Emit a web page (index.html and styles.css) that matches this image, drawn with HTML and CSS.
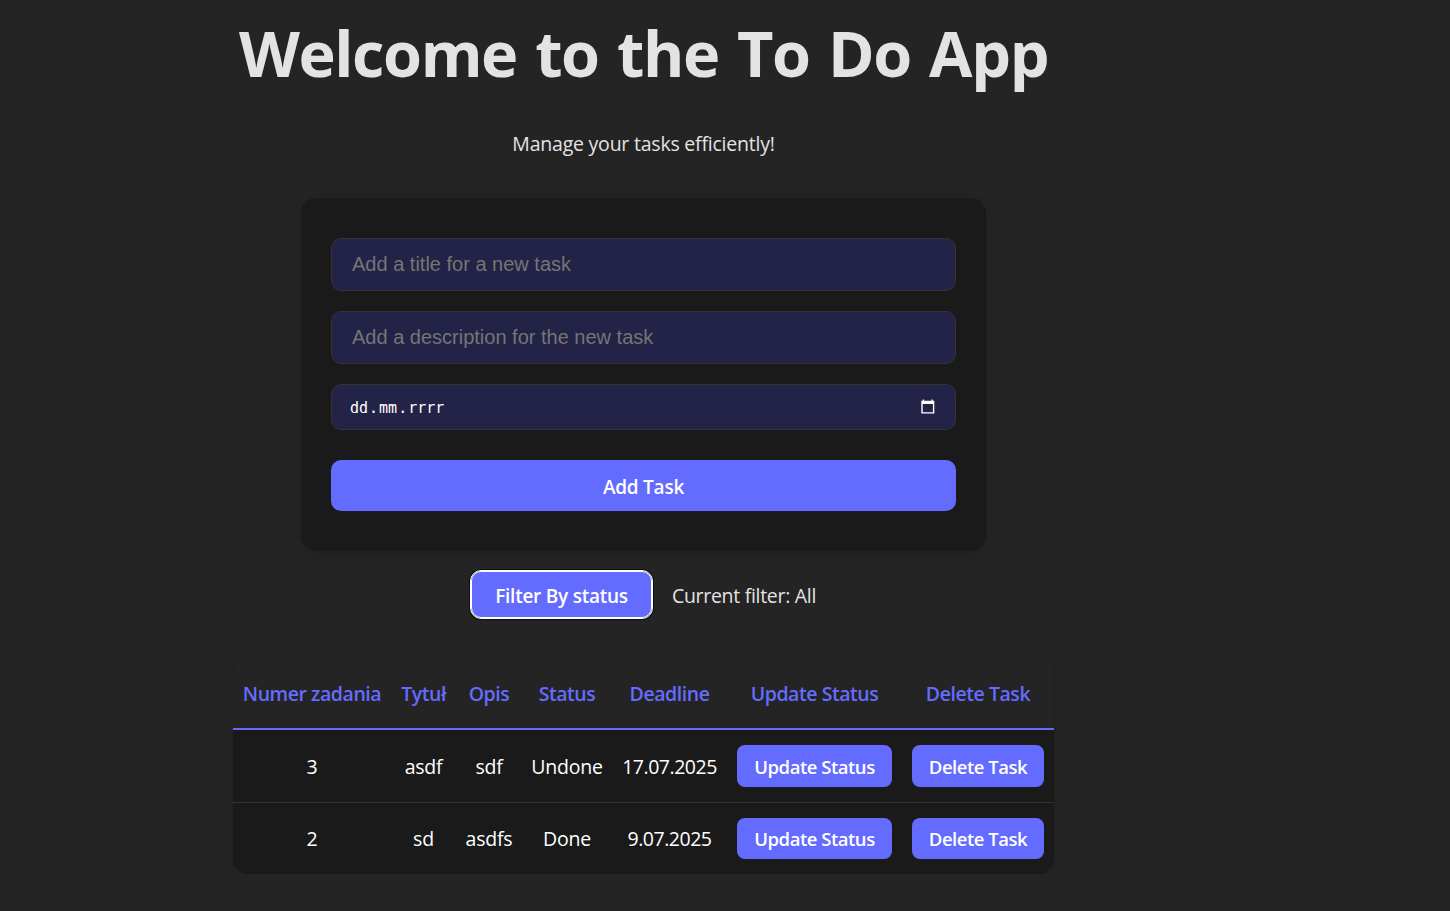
FILE: index.html
```html
<!DOCTYPE html>
<html lang="en">
<head>
<meta charset="utf-8">
<title>To Do App</title>
<link rel="stylesheet" href="styles.css">
</head>
<body>
<main class="app">
  <h1 class="title">Welcome to the To Do App</h1>
  <p class="subtitle">Manage your tasks efficiently!</p>
  <form class="task-form">
    <input class="field" type="text" placeholder="Add a title for a new task">
    <input class="field" type="text" placeholder="Add a description for the new task">
    <div class="field date-field">
      <span class="date-text">dd<span class="dot">.</span>mm<span class="dot">.</span>rrrr</span>
      <svg class="calendar" width="15" height="16" viewBox="0 0 15 16"><path fill="#fff" fill-rule="evenodd" d="M2.800 .6h1.300v1.200h7.400V.6h1.300v1.200h1.500V14.500H1.300V1.800h1.500zM2.700 5v8.200h10.200V5z"/></svg>
    </div>
    <button class="btn add-btn" type="button">Add Task</button>
  </form>
  <div class="filter">
    <button class="btn filter-btn" type="button">Filter By status</button>
    <span class="filter-label">Current filter: All</span>
  </div>
  <table class="tasks">
    <colgroup><col class="c-num"><col class="c-title"><col class="c-desc"><col class="c-status"><col class="c-date"><col class="c-update"><col class="c-delete"></colgroup>
    <thead>
      <tr><th>Numer zadania</th><th>Tytuł</th><th>Opis</th><th>Status</th><th>Deadline</th><th>Update Status</th><th>Delete Task</th></tr>
    </thead>
    <tbody>
      <tr><td>3</td><td>asdf</td><td>sdf</td><td>Undone</td><td class="date">17.07.2025</td><td class="action"><button class="btn row-btn" type="button">Update Status</button></td><td class="action"><button class="btn row-btn" type="button">Delete Task</button></td></tr>
      <tr><td>2</td><td>sd</td><td>asdfs</td><td>Done</td><td class="date">9.07.2025</td><td class="action"><button class="btn row-btn" type="button">Update Status</button></td><td class="action"><button class="btn row-btn" type="button">Delete Task</button></td></tr>
    </tbody>
  </table>
</main>
</body>
</html>
```
FILE: styles.css
```css
* { box-sizing: border-box; }
body {
  margin: 0;
  background: #242424;
  color: #e3e3e3;
  font-family: "Open Sans", "Segoe UI", sans-serif;
  font-size: 19.5px;
  line-height: 30px;
  letter-spacing: -0.22px;
}
.app {
  width: 821px;
  margin-left: 233px;
  padding-top: 18px;
  display: flex;
  flex-direction: column;
  align-items: center;
}
.title {
  margin: 0;
  font-size: 63px;
  line-height: 70px;
  font-weight: 700;
  letter-spacing: -1.4px;
  word-spacing: 3.3px;
  white-space: nowrap;
}
.subtitle { margin: 41px 0 39px; }
.task-form {
  width: 685px;
  height: 353px;
  padding: 40px 30px;
  border-radius: 15px;
  background: #1a1a1a;
  box-shadow: 0 4px 12px rgba(0, 0, 0, 0.1);
  display: flex;
  flex-direction: column;
  gap: 20px;
}
.field {
  width: 100%;
  height: 53px;
  padding: 0 20px;
  border: 1px solid #333;
  border-radius: 10px;
  background: #232347;
  color: #fff;
  font: 20px "Liberation Sans", Arial, sans-serif;
  letter-spacing: 0;
}
.field::placeholder { color: #757575; }
.date-field {
  height: 46px;
  padding: 0 20px 0 18px;
  display: flex;
  align-items: center;
  justify-content: space-between;
  font: 15px "DejaVu Sans Mono", monospace;
}
.date-text { padding-top: 2px; }
.dot { padding: 0 1px; }
.btn {
  border: 0;
  padding: 0;
  border-radius: 8px;
  background: #646cff;
  color: #fff;
  font-family: inherit;
  font-size: 19px;
  font-weight: 650;
  letter-spacing: -0.25px;
}
.add-btn { height: 51px; margin-top: 10px; border-radius: 10px; padding-top: 2px; }
.filter { display: flex; align-items: center; gap: 20px; margin-top: 20px; }
.filter-label { padding-top: 2px; letter-spacing: -0.3px; }
.filter-btn {
  width: 181px;
  height: 47px;
  padding-top: 2px;
  border-radius: 10px;
  border: 1px solid #fff;
  outline: 1px solid #fff;
  box-shadow: 0 0 0 2px #101010;
}
.tasks {
  width: 821px;
  margin-top: 40px;
  table-layout: fixed;
  border-collapse: separate;
  border-spacing: 0;
  border-radius: 15px;
  overflow: hidden;
  background: #1a1a1a;
  box-shadow: 0 4px 12px rgba(0, 0, 0, 0.1);
  color: #fff;
  text-align: center;
  white-space: nowrap;
}
.c-num { width: 158px; }
.c-title { width: 65px; }
.c-desc { width: 66px; }
.c-status { width: 90px; }
.c-date { width: 115px; }
.c-update { width: 175px; }
.c-delete { width: 152px; }
th, td { padding: 0; }
th {
  height: 72px;
  padding-top: 2px;
  background: #242424;
  border-bottom: 2px solid #646cff;
  color: #646cff;
  font-weight: 600;
  letter-spacing: -0.45px;
}
td { height: 71px; }
.date { letter-spacing: -0.48px; }
tbody tr:first-child td { height: 73px; padding-top: 2px; border-bottom: 1px solid #333; }
tbody tr:first-child .action { padding-top: 0; }
.row-btn { display: block; height: 41px; margin: 0 10px; width: calc(100% - 20px); font-size: 18.5px; letter-spacing: -0.48px; }
tbody tr:first-child .row-btn { height: 42px; }
```
